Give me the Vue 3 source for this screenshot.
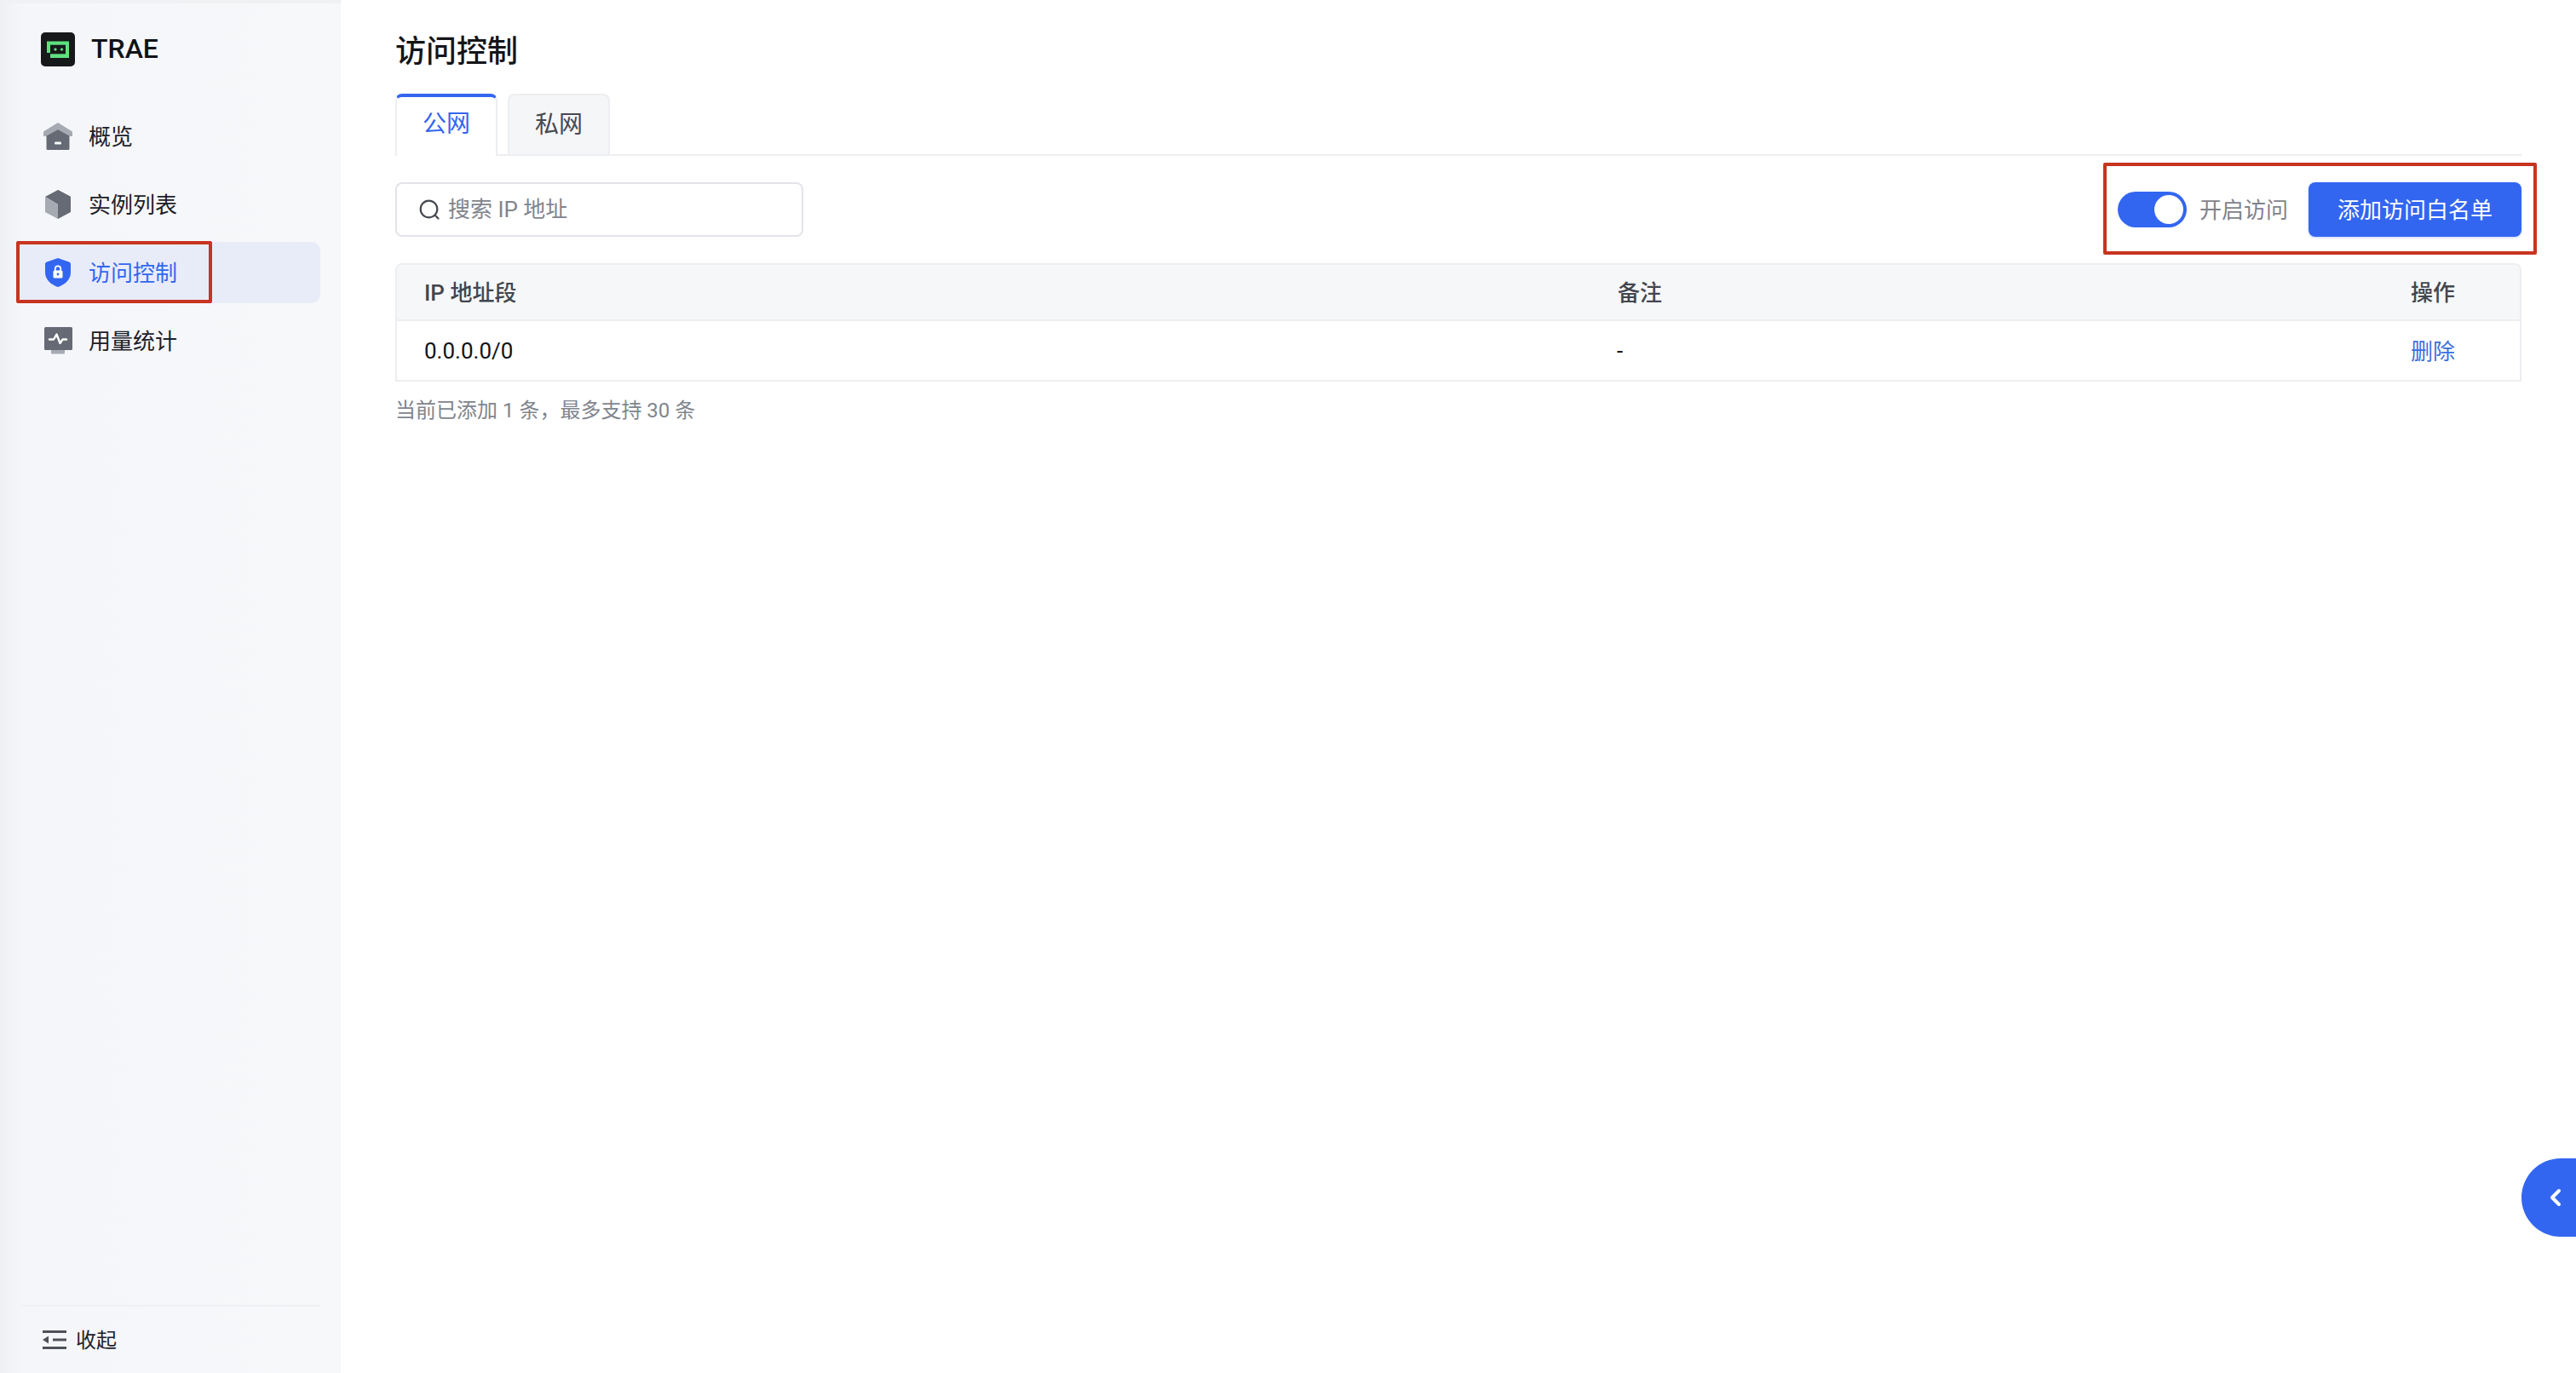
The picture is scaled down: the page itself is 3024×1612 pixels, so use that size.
<script setup>
const navItems = [
  { key: 'overview', label: '概览' },
  { key: 'instances', label: '实例列表' },
  { key: 'access', label: '访问控制', active: true },
  { key: 'usage', label: '用量统计' }
]
</script>

<template>
  <div class="page">
    <aside class="sidebar">
      <div class="brand">
        <svg class="logo" viewBox="0 0 40 40">
          <rect width="40" height="40" rx="5" fill="#16181a" />
          <path d="M7 10.500H33V30H11V24H7Z" fill="#5fe07f" />
          <rect x="11" y="14.700" width="18" height="10.600" fill="#16181a" />
          <path d="M17 18L19 20L17 22L15 20Z M24.500 18L26.500 20L24.500 22L22.500 20Z" fill="#5fe07f" />
        </svg>
        <span class="brand-name">TRAE</span>
      </div>

      <nav class="nav">
        <a v-for="item in navItems" :key="item.key" class="nav-item" :class="{ active: item.active }">
          <svg v-if="item.key === 'overview'" class="nav-icon" viewBox="0 0 40 40">
            <path d="M20 4L37 14.500V20H34L20 12L6 20H3V14.500Z" fill="#a6aab3" />
            <path d="M6.500 19.500L20 12L33.500 19.500V34.500A1.500 1.500 0 0 1 32 36H8A1.500 1.500 0 0 1 6.500 34.500Z" fill="#666a75" />
            <rect x="16" y="26.500" width="8" height="3" rx="1" fill="#f6f8fb" />
          </svg>
          <svg v-else-if="item.key === 'instances'" class="nav-icon" viewBox="0 0 40 40">
            <path d="M20 3L35 11V29L20 37Z" fill="#666a75" />
            <path d="M20 3L35 11L20 20L5 11Z" fill="#666a75" />
            <path d="M5 11L20 20V37L5 29Z" fill="#a6aab3" />
          </svg>
          <svg v-else-if="item.key === 'access'" class="nav-icon" viewBox="0 0 40 40">
            <path d="M20 3L33 7.500C34.200 8 35 9 35 10.200V20C35 29 27 34.500 20 37C13 34.500 5 29 5 20V10.200C5 9 5.800 8 7 7.500Z" fill="#3366f0" />
            <rect x="14.500" y="17.500" width="11" height="9" rx="1.500" fill="#fff" />
            <path d="M16.800 18V15.500A3.200 3.200 0 0 1 23.200 15.500V18" fill="none" stroke="#fff" stroke-width="1.800" />
            <circle cx="20" cy="22" r="1.400" fill="#3366f0" />
          </svg>
          <svg v-else class="nav-icon" viewBox="0 0 40 40">
            <rect x="12" y="30" width="16" height="5.500" rx="1" fill="#a6aab3" />
            <rect x="4" y="4" width="33" height="27" rx="1.500" fill="#666a75" />
            <path d="M10 18.500H15L18.500 12.500L22.500 23L25.500 18.500H30" fill="none" stroke="#fff" stroke-width="2.400" stroke-linejoin="round" stroke-linecap="round" />
          </svg>
          <span class="nudge">{{ item.label }}</span>
        </a>
      </nav>

      <div class="collapse">
        <svg class="collapse-icon" viewBox="0 0 28 22">
          <rect width="28" height="3" fill="#4e5159" />
          <rect y="19" width="28" height="3" fill="#4e5159" />
          <rect x="12" y="9.500" width="16" height="3" fill="#4e5159" />
          <path d="M7 6.500V15.500L0 11Z" fill="#4e5159" />
        </svg>
        <span class="nudge">收起</span>
      </div>
    </aside>

    <main class="content">
      <h1 class="title">访问控制</h1>

      <div class="tabs">
        <div class="tab selected">公网</div>
        <div class="tab">私网</div>
      </div>

      <div class="toolbar">
        <label class="search">
          <svg class="search-icon" viewBox="0 0 26 26">
            <circle cx="12.500" cy="12.500" r="9.800" fill="none" stroke="#45484f" stroke-width="2.200" />
            <path d="M20 20L23.500 23.500" stroke="#45484f" stroke-width="2.200" stroke-linecap="round" />
          </svg>
          <input type="text" placeholder="搜索 IP 地址" />
        </label>
        <div class="actions">
          <span class="switch"><span class="knob"></span></span>
          <span class="switch-label nudge">开启访问</span>
          <button class="primary" type="button">添加访问白名单</button>
        </div>
      </div>

      <div class="table">
        <div class="row head">
          <span class="nudge">IP 地址段</span>
          <span class="nudge">备注</span>
          <span class="nudge">操作</span>
        </div>
        <div class="row">
          <span>0.0.0.0/0</span>
          <span class="dash">-</span>
          <a class="link nudge">删除</a>
        </div>
      </div>

      <p class="hint">当前已添加 1 条，最多支持 30 条</p>
    </main>

    <span class="mark mark-nav"></span>
    <span class="mark mark-actions"></span>

    <button class="float-btn" type="button" aria-label="展开">
      <svg viewBox="0 0 16 22" class="float-icon">
        <path d="M12 3L4 11L12 19" fill="none" stroke="#fff" stroke-width="4" stroke-linecap="round" stroke-linejoin="round" />
      </svg>
    </button>
  </div>
</template>

<style scoped>
.page {
  position: relative;
  display: flex;
  height: 100vh;
  overflow: hidden;
  background: #fff;
  color: #1d2129;
  font-family: Roboto, "Noto Sans CJK SC", sans-serif;
}

.nudge {
  padding-bottom: 3px;
}

.sidebar {
  display: flex;
  flex-direction: column;
  flex: none;
  width: 400px;
  box-sizing: border-box;
  padding: 38px 24px 0 20px;
  background: linear-gradient(90deg, #eef0f3 0, #f5f6f9 24px, #f7f8fa 100%);
  border-top: 4px solid #f0f1f3;
}

.brand {
  display: flex;
  align-items: center;
  gap: 19px;
  height: 40px;
  margin-top: -4px;
  padding-left: 28px;
}

.logo {
  width: 40px;
  height: 40px;
  flex: none;
}

.brand-name {
  padding-bottom: 3px;
  font-size: 32px;
  font-weight: 500;
  color: #111317;
}

.nav {
  display: flex;
  flex-direction: column;
  gap: 8px;
  margin-top: 46px;
}

.nav-item {
  display: flex;
  align-items: center;
  gap: 16px;
  height: 72px;
  padding-left: 28px;
  border-radius: 10px;
  font-size: 26px;
  color: #1d2129;
}

.nav-item.active {
  background: #e8ecf9;
  color: #3366f0;
}

.nav-icon {
  width: 40px;
  height: 40px;
  flex: none;
}

.collapse {
  display: flex;
  align-items: center;
  gap: 11px;
  height: 78px;
  margin-top: auto;
  margin-left: 4px;
  padding-left: 26px;
  border-top: 2px solid #eff0f3;
  font-size: 24px;
  color: #1d2129;
}

.collapse-icon {
  width: 28px;
  height: 22px;
  flex: none;
}

.content {
  flex: 1;
  min-width: 0;
  padding: 37px 64px 0 64px;
}

.title {
  margin: 0;
  font-size: 36px;
  line-height: 48px;
  font-weight: 500;
  color: #14161a;
}

.tabs {
  display: flex;
  gap: 12px;
  height: 71px;
  margin-top: 25px;
  border-bottom: 2px solid #eceef1;
}

.tab {
  display: flex;
  align-items: center;
  justify-content: center;
  width: 120px;
  height: 71px;
  box-sizing: border-box;
  padding-bottom: 6px;
  border: 2px solid #eceef1;
  border-bottom: none;
  border-radius: 8px 8px 0 0;
  background: #f5f6f8;
  font-size: 28px;
  color: #474a52;
}

.tab.selected {
  height: 73px;
  padding-bottom: 11px;
  border-top: 4px solid #3366f0;
  background: #fff;
  color: #3366f0;
}

.toolbar {
  display: flex;
  align-items: center;
  justify-content: space-between;
  margin-top: 31px;
}

.search {
  display: flex;
  align-items: center;
  gap: 9px;
  width: 479px;
  height: 64px;
  box-sizing: border-box;
  padding-left: 25px;
  border: 2px solid #e2e4e8;
  border-radius: 8px;
}

.search-icon {
  width: 26px;
  height: 26px;
  flex: none;
}

.search input {
  flex: 1;
  min-width: 0;
  border: none;
  outline: none;
  padding: 0;
  background: transparent;
  font: inherit;
  font-size: 26px;
  color: #1d2129;
}

.search input::placeholder {
  color: #81858d;
}

.actions {
  display: flex;
  align-items: center;
}

.switch {
  display: flex;
  align-items: center;
  justify-content: flex-end;
  width: 81px;
  height: 42px;
  box-sizing: border-box;
  padding-right: 4px;
  border-radius: 21px;
  background: #3366f0;
}

.knob {
  width: 34px;
  height: 34px;
  border-radius: 50%;
  background: #fff;
}

.switch-label {
  margin-left: 15px;
  font-size: 26px;
  color: #7f838b;
}

.primary {
  width: 250px;
  height: 64px;
  margin-left: 24px;
  padding: 0 0 3px;
  border: none;
  border-radius: 8px;
  background: #3366f0;
  color: #fff;
  font: inherit;
  font-size: 26px;
  box-shadow: 0 1px 3px rgba(51, 102, 240, 0.3);
}

.table {
  margin-top: 31px;
  border: 2px solid #eceef1;
  border-radius: 8px 8px 0 0;
}

.row {
  display: grid;
  grid-template-columns: 1401px 1fr auto;
  align-items: center;
  height: 69px;
  padding: 0 76px 0 32px;
  font-size: 26px;
  color: #111317;
}

.row.head {
  height: 64px;
  border-bottom: 2px solid #eceef1;
  background: #f6f7f9;
  border-radius: 6px 6px 0 0;
  font-weight: 500;
  color: #42464e;
}

.dash {
  margin-left: -1px;
}

.link {
  color: #3c6ee0;
}

.hint {
  margin: 18px 0 0;
  font-size: 24px;
  line-height: 32px;
  color: #81858d;
}

.mark {
  position: absolute;
  box-sizing: border-box;
  border: 4px solid #c8341f;
  border-radius: 2px;
  pointer-events: none;
}

.mark-nav {
  left: 19px;
  top: 283px;
  width: 230px;
  height: 73px;
}

.mark-actions {
  left: 2469px;
  top: 191px;
  width: 509px;
  height: 108px;
}

.float-btn {
  position: absolute;
  right: 0;
  top: 1360px;
  display: flex;
  align-items: center;
  justify-content: flex-end;
  width: 64px;
  height: 92px;
  padding: 0 16px 0 0;
  border: none;
  border-radius: 46px 0 0 46px;
  background: #3366f0;
}

.float-icon {
  width: 16px;
  height: 22px;
}
</style>
